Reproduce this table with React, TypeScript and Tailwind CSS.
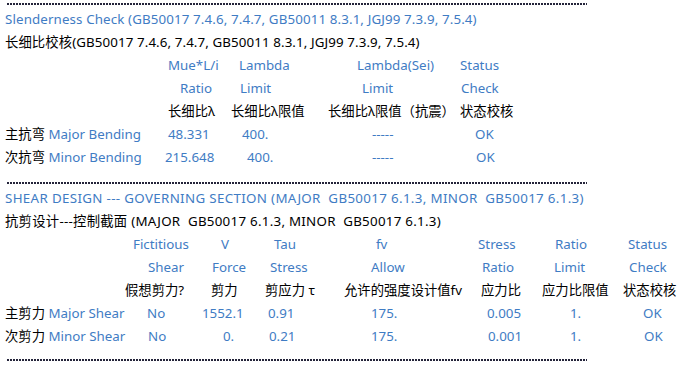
import React from "react";

const B = "text-[#3f7cc4]";
const K = "text-black";

function Dots() {
  return (
    <div className="ml-[7px] w-[580px] h-[2px] bg-[repeating-linear-gradient(90deg,#24243a_0px,#24243a_2px,transparent_2px,transparent_3px)]" />
  );
}

function Row({ children }: { children: React.ReactNode }) {
  return <div className="flex h-[23px] items-center whitespace-nowrap pl-[5px]">{children}</div>;
}

export default function App() {
  return (
    <div
      className="w-[681px] h-[367px] bg-white overflow-hidden pt-[3px] text-[13.333px] leading-[23px]"
      style={{ fontFamily: '"Noto Sans", "Noto Sans CJK SC", sans-serif' }}
    >
      <Dots />
      <div className="mt-[3px]">
        <Row>
          <span className={"tracking-[0.12px] " + B}>Slenderness Check (GB50017 7.4.6, 7.4.7, GB50011 8.3.1, JGJ99 7.3.9, 7.5.4)</span>
        </Row>
        <Row>
          <span className={"tracking-[0.1px] " + K}>长细比校核(GB50017 7.4.6, 7.4.7, GB50011 8.3.1, JGJ99 7.3.9, 7.5.4)</span>
        </Row>
        <Row>
          <span className="w-[163px] shrink-0" />
          <span className={"w-[71px] shrink-0 " + B}>Mue*L/i</span>
          <span className={"w-[118px] shrink-0 " + B}>Lambda</span>
          <span className={"w-[103px] shrink-0 " + B}>Lambda(Sei)</span>
          <span className={B}>Status</span>
        </Row>
        <Row>
          <span className="w-[175px] shrink-0" />
          <span className={"w-[60px] shrink-0 " + B}>Ratio</span>
          <span className={"w-[122px] shrink-0 " + B}>Limit</span>
          <span className={"w-[99px] shrink-0 " + B}>Limit</span>
          <span className={B}>Check</span>
        </Row>
        <Row>
          <span className="w-[163px] shrink-0" />
          <span className={"w-[63px] shrink-0 " + K}>长细比λ</span>
          <span className={"w-[97px] shrink-0 " + K}>长细比λ限值</span>
          <span className={"w-[132px] shrink-0 " + K}>长细比λ限值（抗震）</span>
          <span className={K}>状态校核</span>
        </Row>
        <Row>
          <span className="w-[163px] shrink-0">
            <span className={K}>主抗弯</span> <span className={B}>Major Bending</span>
          </span>
          <span className={"w-[74px] shrink-0 " + B}>48.331</span>
          <span className={"w-[130px] shrink-0 " + B}>400.</span>
          <span className={"w-[103px] shrink-0 " + B}>-----</span>
          <span className={B}>OK</span>
        </Row>
        <Row>
          <span className="w-[160px] shrink-0">
            <span className={K}>次抗弯</span> <span className={B}>Minor Bending</span>
          </span>
          <span className={"w-[82px] shrink-0 " + B}>215.648</span>
          <span className={"w-[125px] shrink-0 " + B}>400.</span>
          <span className={"w-[104px] shrink-0 " + B}>-----</span>
          <span className={B}>OK</span>
        </Row>
      </div>

      <div className="mt-[13px]">
        <Dots />
      </div>

      <div className="mt-[3px]">
        <Row>
          <span className={"tracking-[0.34px] " + B}>SHEAR DESIGN --- GOVERNING SECTION (MAJOR&nbsp; GB50017 6.1.3, MINOR&nbsp; GB50017 6.1.3)</span>
        </Row>
        <Row>
          <span className={"tracking-[0.27px] " + K}>抗剪设计---控制截面 (MAJOR&nbsp; GB50017 6.1.3, MINOR&nbsp; GB50017 6.1.3)</span>
        </Row>
        <Row>
          <span className="w-[128px] shrink-0" />
          <span className={"w-[88px] shrink-0 " + B}>Fictitious</span>
          <span className={"w-[53px] shrink-0 " + B}>V</span>
          <span className={"w-[102px] shrink-0 " + B}>Tau</span>
          <span className={"w-[102px] shrink-0 " + B}>fv</span>
          <span className={"w-[77px] shrink-0 " + B}>Stress</span>
          <span className={"w-[73px] shrink-0 " + B}>Ratio</span>
          <span className={B}>Status</span>
        </Row>
        <Row>
          <span className="w-[143px] shrink-0" />
          <span className={"w-[64px] shrink-0 " + B}>Shear</span>
          <span className={"w-[58px] shrink-0 " + B}>Force</span>
          <span className={"w-[101px] shrink-0 " + B}>Stress</span>
          <span className={"w-[111px] shrink-0 " + B}>Allow</span>
          <span className={"w-[72px] shrink-0 " + B}>Ratio</span>
          <span className={"w-[75px] shrink-0 " + B}>Limit</span>
          <span className={B}>Check</span>
        </Row>
        <Row>
          <span className="w-[120px] shrink-0" />
          <span className={"w-[86px] shrink-0 " + K}>假想剪力?</span>
          <span className={"w-[54px] shrink-0 " + K}>剪力</span>
          <span className={"w-[79px] shrink-0 " + K}>剪应力 τ</span>
          <span className={"w-[137px] shrink-0 " + K}>允许的强度设计值fv</span>
          <span className={"w-[61px] shrink-0 " + K}>应力比</span>
          <span className={"w-[81px] shrink-0 " + K}>应力比限值</span>
          <span className={K}>状态校核</span>
        </Row>
        <Row>
          <span className="w-[142px] shrink-0">
            <span className={K}>主剪力</span> <span className={B}>Major Shear</span>
          </span>
          <span className={"w-[55px] shrink-0 " + B}>No</span>
          <span className={"w-[66px] shrink-0 " + B}>1552.1</span>
          <span className={"w-[103px] shrink-0 " + B}>0.91</span>
          <span className={"w-[116px] shrink-0 " + B}>175.</span>
          <span className={"w-[83px] shrink-0 " + B}>0.005</span>
          <span className={"w-[73px] shrink-0 " + B}>1.</span>
          <span className={B}>OK</span>
        </Row>
        <Row>
          <span className="w-[143px] shrink-0">
            <span className={K}>次剪力</span> <span className={B}>Minor Shear</span>
          </span>
          <span className={"w-[75px] shrink-0 " + B}>No</span>
          <span className={"w-[46px] shrink-0 " + B}>0.</span>
          <span className={"w-[102px] shrink-0 " + B}>0.21</span>
          <span className={"w-[117px] shrink-0 " + B}>175.</span>
          <span className={"w-[82px] shrink-0 " + B}>0.001</span>
          <span className={"w-[74px] shrink-0 " + B}>1.</span>
          <span className={B}>OK</span>
        </Row>
      </div>

      <div className="mt-[11px]">
        <Dots />
      </div>
    </div>
  );
}
